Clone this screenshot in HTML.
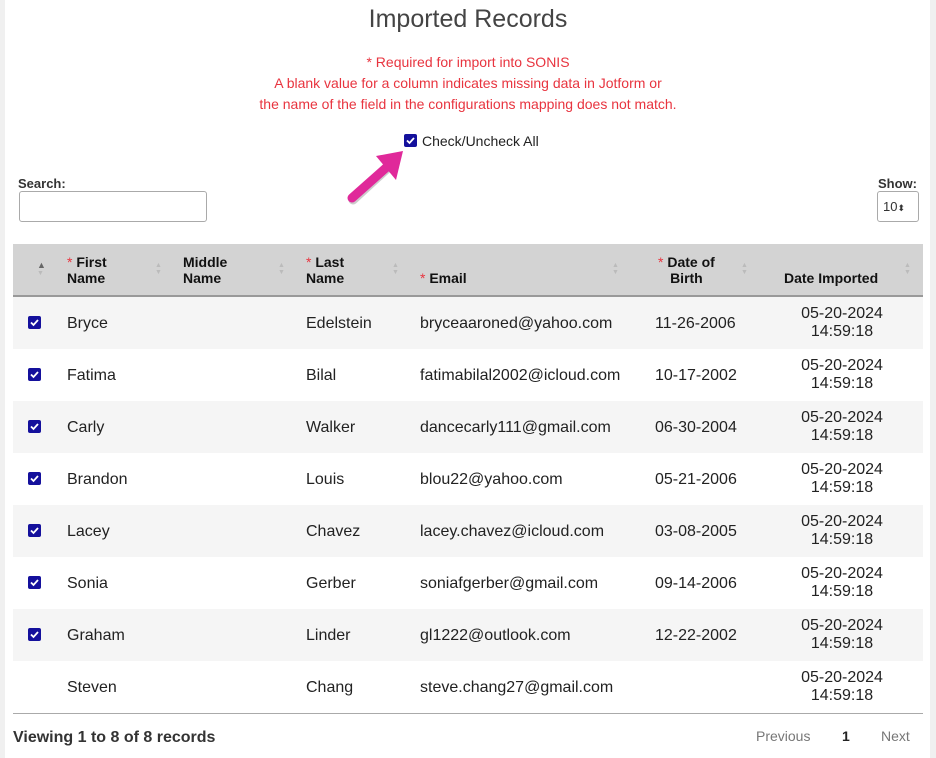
<!DOCTYPE html>
<html><head><meta charset="utf-8"><style>
body{margin:0;width:936px;height:758px;background:#f0f0f0;font-family:"Liberation Sans",Arial,sans-serif;position:relative;overflow:hidden}
.page{position:absolute;left:5px;top:0;width:925px;height:758px;background:#fff}
.a{position:absolute;white-space:nowrap}
.red{color:#e8343f}
.cb{position:absolute;width:13px;height:13px;background:#14109c;border-radius:2px}
.cb svg{position:absolute;left:0;top:0}
.hd{font-weight:bold;font-size:14px;color:#111;line-height:16px}
.row{position:absolute;left:13px;width:910px;height:52px;font-size:16px;color:#222}
.row .a{top:18px}
.sort{position:absolute;width:7px;font-size:7px;color:#bbb;line-height:7px}
</style></head><body>
<div class="page"></div>
<div class="a" style="left:0;width:936px;text-align:center;top:5px;font-size:25px;color:#444">Imported Records</div>
<div class="a red" style="left:0;width:936px;text-align:center;top:52px;font-size:14px;line-height:21px">* Required for import into SONIS<br>A blank value for a column indicates missing data in Jotform or<br>the name of the field in the configurations mapping does not match.</div>
<div class="cb" style="left:404px;top:134px"><svg width="13" height="13"><path d="M3 6.5l2.5 2.5 4.5-5" stroke="#fff" stroke-width="1.8" fill="none"/></svg></div>
<div class="a" style="left:422px;top:133px;font-size:14px;color:#222">Check/Uncheck All</div>
<svg class="a" style="left:340px;top:148px" width="70" height="62"><path d="M13 52L49 19" stroke="#000" stroke-opacity=".2" stroke-width="9" stroke-linecap="round" fill="none"/><path d="M12 50L48 18" stroke="#e0299a" stroke-width="9" stroke-linecap="round" fill="none"/><path d="M36 8L63 3L56 32Z" fill="#e0299a"/></svg>
<div class="a" style="left:18px;top:176px;font-size:13px;font-weight:bold;color:#333">Search:</div>
<div class="a" style="left:19px;top:191px;width:186px;height:29px;border:1px solid #aaa;border-radius:3px"></div>
<div class="a" style="left:878px;top:176px;font-size:13px;font-weight:bold;color:#333">Show:</div>
<div class="a" style="left:877px;top:191px;width:40px;height:29px;border:1px solid #aaa;border-radius:3px;font-size:13px;color:#333;line-height:29px;text-indent:5px">10<span style="font-size:9px">⬍</span></div>
<div class="a" style="left:13px;top:244px;width:910px;height:51px;background:#d3d3d3;border-bottom:2px solid #999"></div>
<div class="sort" style="left:37px;top:262px;color:#666;font-size:9px">▲</div><div class="sort" style="left:37px;top:270px;color:#bbb">▼</div>
<div class="a hd" style="left:67px;top:254px"><span class="red" style="font-weight:normal">*</span> First<br>Name</div>
<div class="a hd" style="left:183px;top:254px">Middle<br>Name</div>
<div class="a hd" style="left:306px;top:254px"><span class="red" style="font-weight:normal">*</span> Last<br>Name</div>
<div class="a hd" style="left:420px;top:270px"><span class="red" style="font-weight:normal">*</span> Email</div>
<div class="a hd" style="left:658px;top:254px;text-align:center"><span class="red" style="font-weight:normal">*</span> Date of<br>Birth</div>
<div class="a hd" style="left:784px;top:270px">Date Imported</div>
<div class="sort" style="left:155px;top:262px">▲<br>▼</div>
<div class="sort" style="left:278px;top:262px">▲<br>▼</div>
<div class="sort" style="left:392px;top:262px">▲<br>▼</div>
<div class="sort" style="left:612px;top:262px">▲<br>▼</div>
<div class="sort" style="left:741px;top:262px">▲<br>▼</div>
<div class="sort" style="left:904px;top:262px">▲<br>▼</div>

<div id="rows"></div>
<script>
var d=[["Bryce","Edelstein","bryceaaroned@yahoo.com","11-26-2006",1],["Fatima","Bilal","fatimabilal2002@icloud.com","10-17-2002",1],["Carly","Walker","dancecarly111@gmail.com","06-30-2004",1],["Brandon","Louis","blou22@yahoo.com","05-21-2006",1],["Lacey","Chavez","lacey.chavez@icloud.com","03-08-2005",1],["Sonia","Gerber","soniafgerber@gmail.com","09-14-2006",1],["Graham","Linder","gl1222@outlook.com","12-22-2002",1],["Steven","Chang","steve.chang27@gmail.com","",0]];
var h="";d.forEach(function(r,i){var t=297+i*52;h+='<div class="row" style="top:'+t+'px;background:'+(i%2?'#fff':'#f5f5f5')+'">'+(r[4]?'<div class="cb" style="left:15px;top:19px"><svg width="13" height="13"><path d="M3 6.5l2.5 2.5 4.5-5" stroke="#fff" stroke-width="1.8" fill="none"/></svg></div>':'')+'<div class="a" style="left:54px">'+r[0]+'</div><div class="a" style="left:293px">'+r[1]+'</div><div class="a" style="left:407px">'+r[2]+'</div><div class="a" style="left:642px">'+r[3]+'</div><div class="a" style="left:770px;width:118px;text-align:center;top:8px;line-height:18px">05-20-2024<br>14:59:18</div></div>';});
document.getElementById("rows").innerHTML=h;
</script>
<div class="a" style="left:13px;top:713px;width:910px;height:1px;background:#aaa"></div>
<div class="a" style="left:13px;top:729px;font-size:16px;font-weight:bold;color:#333">Viewing 1 to 8 of 8 records</div>
<div class="a" style="left:756px;top:728px;font-size:14px;color:#777">Previous</div>
<div class="a" style="left:842px;top:728px;font-size:14px;font-weight:bold;color:#222">1</div>
<div class="a" style="left:881px;top:728px;font-size:14px;color:#777">Next</div>
</body></html>
